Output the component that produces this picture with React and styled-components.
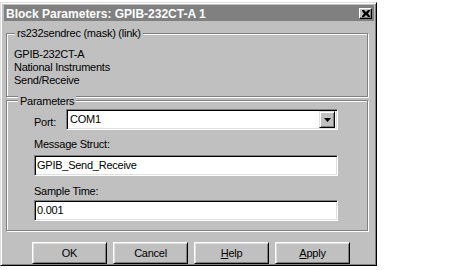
import React from 'react';
import styled, { createGlobalStyle } from 'styled-components';

const GlobalStyle = createGlobalStyle`
  html, body {
    margin: 0;
    padding: 0;
    background: #fff;
  }
  body {
    font-family: "Liberation Sans", Arial, sans-serif;
    font-size: 11px;
    letter-spacing: -0.25px;
    color: #000;
  }
`;

const Window = styled.div`
  box-sizing: border-box;
  width: 377px;
  height: 264px;
  margin-top: 2px;
  background: #c0c0c0;
  border-top: 1px solid #dfdfdf;
  border-left: 1px solid #dfdfdf;
  border-right: 1px solid #000;
  border-bottom: 1px solid #000;
  box-shadow: inset 1px 1px #fff, inset -1px -1px #808080;
  padding: 2px 2px 2px 3px;
  display: flex;
  flex-direction: column;
`;

const Caption = styled.div`
  height: 16px;
  background: #808080;
  display: flex;
  align-items: center;
  justify-content: space-between;
  padding: 0 2px 0 2px;
`;

const CaptionText = styled.span`
  font-weight: bold;
  font-size: 12px;
  letter-spacing: 0;
  line-height: 16px;
  color: #fff;
  padding-top: 1px;
`;

const CloseButton = styled.div`
  box-sizing: border-box;
  width: 13px;
  height: 11px;
  background: #c0c0c0;
  border-top: 1px solid #fff;
  border-left: 1px solid #fff;
  border-right: 1px solid #000;
  border-bottom: 1px solid #000;
  box-shadow: inset -1px -1px #808080;
  display: flex;
  align-items: center;
  justify-content: center;
`;

const Body = styled.div`
  display: flex;
  flex-direction: column;
  padding: 12px 0 0 2px;
`;

const Group = styled.div`
  box-sizing: border-box;
  width: 362px;
  margin-top: ${p => p.$gap || 0}px;
  border: 1px solid #808080;
  box-shadow: 1px 1px 0 #fff, inset 1px 1px 0 #fff;
  display: flex;
  flex-direction: column;
  padding: ${p => p.$pad};
`;

const Legend = styled.span`
  align-self: flex-start;
  line-height: 13px;
  background: #c0c0c0;
  padding: 0 2px;
  margin: ${p => p.$top}px 0 0 ${p => p.$left}px;
`;

const InfoLines = styled.div`
  margin-top: 8px;
  line-height: 13px;
`;

const Row = styled.div`
  display: flex;
  align-items: flex-start;
  margin-top: 1px;
`;

const Label = styled.div`
  line-height: 13px;
  margin-top: ${p => p.$top || 0}px;
  width: ${p => (p.$width ? `${p.$width}px` : 'auto')};
`;

const Field = styled.div`
  box-sizing: border-box;
  width: ${p => p.$width}px;
  height: 21px;
  margin-top: ${p => p.$top || 0}px;
  background: #fff;
  border-top: 1px solid #808080;
  border-left: 1px solid #808080;
  border-right: 1px solid #fff;
  border-bottom: 1px solid #fff;
  box-shadow: inset 1px 1px #000, inset -1px -1px #dfdfdf;
  display: flex;
  align-items: center;
  padding: 0 2px 0 ${p => p.$indent}px;
  line-height: 13px;
`;

const FieldText = styled.span`
  flex: 1;
`;

const DropButton = styled.div`
  box-sizing: border-box;
  width: 16px;
  height: 17px;
  background: #c0c0c0;
  border-top: 1px solid #dfdfdf;
  border-left: 1px solid #dfdfdf;
  border-right: 1px solid #000;
  border-bottom: 1px solid #000;
  box-shadow: inset 1px 1px #fff, inset -1px -1px #808080;
  display: flex;
  align-items: center;
  justify-content: center;
`;

const ButtonRow = styled.div`
  display: flex;
  gap: 6px;
  margin: 11px 0 0 26px;
`;

const Button = styled.div`
  box-sizing: border-box;
  width: 75px;
  height: 22px;
  background: #c0c0c0;
  border-top: 1px solid #fff;
  border-left: 1px solid #fff;
  border-right: 1px solid #000;
  border-bottom: 1px solid #000;
  box-shadow: inset 1px 1px #dfdfdf, inset -1px -1px #808080;
  display: flex;
  align-items: center;
  justify-content: center;
  line-height: 13px;
`;

const Key = styled.span`
  text-decoration: underline;
`;

function CloseGlyph() {
  return (
    <svg width="8" height="7" viewBox="0 0 8 7">
      <path d="M0 0h2l2 2 2-2h2v1l-2 2.5 2 2.5v1h-2l-2-2-2 2h-2v-1l2-2.5-2-2.5z" fill="#000" />
    </svg>
  );
}

function Arrow() {
  return (
    <svg width="7" height="4" viewBox="0 0 7 4">
      <path d="M0 0h7l-3.5 4z" fill="#000" />
    </svg>
  );
}

export default function App() {
  return (
    <>
      <GlobalStyle />
      <Window>
        <Caption>
          <CaptionText>Block Parameters: GPIB-232CT-A 1</CaptionText>
          <CloseButton>
            <CloseGlyph />
          </CloseButton>
        </Caption>
        <Body>
          <Group $pad="0 0 9px 7px">
            <Legend $top={-7} $left={1}>rs232sendrec (mask) (link)</Legend>
            <InfoLines>
              <div>GPIB-232CT-A</div>
              <div>National Instruments</div>
              <div>Send/Receive</div>
            </InfoLines>
          </Group>
          <Group $gap={3} $pad="0 0 9px 27px">
            <Legend $top={-6} $left={-16}>Parameters</Legend>
            <Row>
              <Label $top={7} $width={32}>Port:</Label>
              <Field $width={272} $indent={3}>
                <FieldText>COM1</FieldText>
                <DropButton>
                  <Arrow />
                </DropButton>
              </Field>
            </Row>
            <Label $top={8}>Message Struct:</Label>
            <Field $width={304} $top={4} $indent={2}>
              <FieldText>GPIB_Send_Receive</FieldText>
            </Field>
            <Label $top={9}>Sample Time:</Label>
            <Field $width={304} $top={2} $indent={2}>
              <FieldText>0.001</FieldText>
            </Field>
          </Group>
          <ButtonRow>
            <Button>OK</Button>
            <Button>Cancel</Button>
            <Button><Key>H</Key>elp</Button>
            <Button><Key>A</Key>pply</Button>
          </ButtonRow>
        </Body>
      </Window>
    </>
  );
}
